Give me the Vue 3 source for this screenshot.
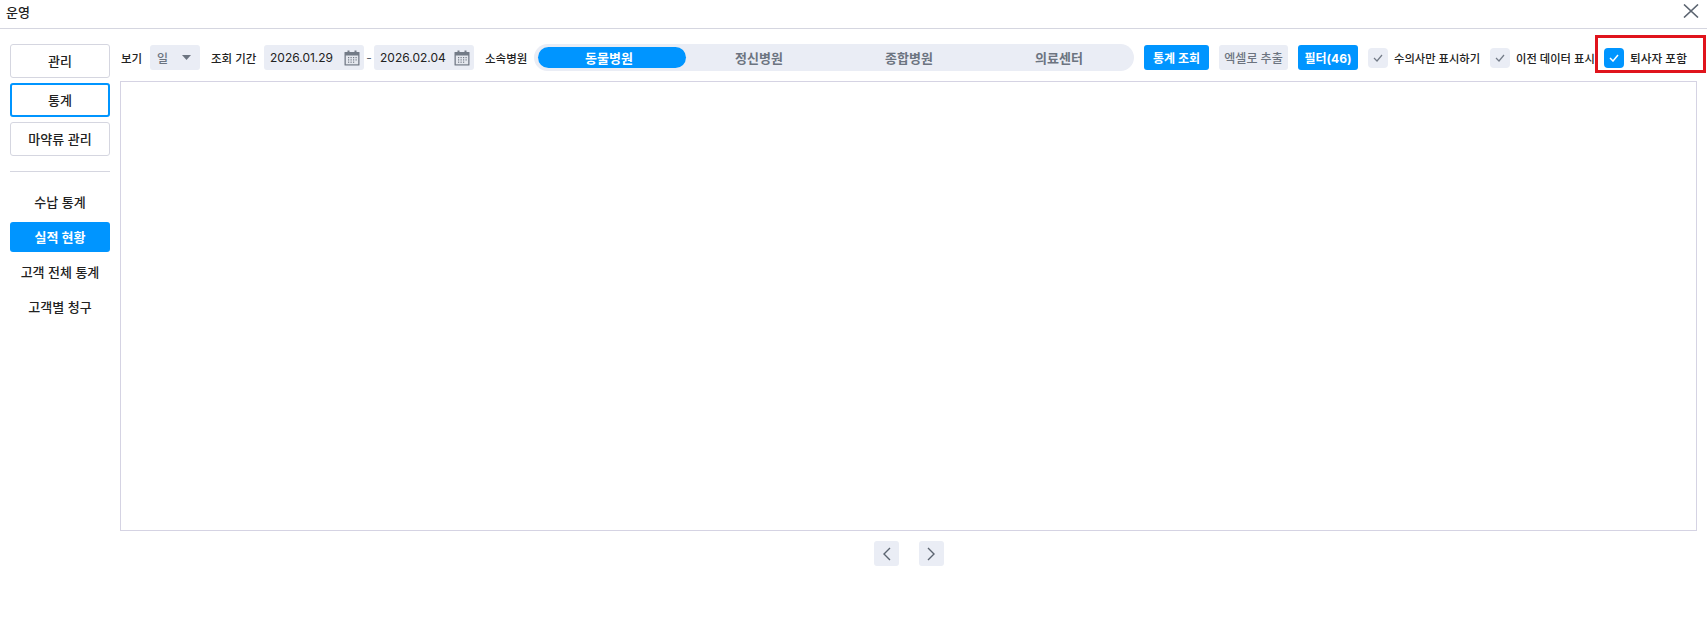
<script setup>
const modes = ['관리', '통계', '마약류 관리']
const subs = ['수납 통계', '실적 현황', '고객 전체 통계', '고객별 청구']
const hospitals = ['동물병원', '정신병원', '종합병원', '의료센터']
const dates = ['2026.01.29', '2026.02.04']
const gridDots = [
  [4, 7], [6.5, 7], [9, 7], [11.5, 7],
  [4, 9.3], [6.5, 9.3], [9, 9.3], [11.5, 9.3],
  [4, 11.6], [6.5, 11.6], [9, 11.6]
]
</script>

<template>
  <div class="page">
    <header class="top">
      <span class="title">운영</span>
      <svg class="close" width="16" height="14" viewBox="0 0 16 14">
        <path d="M1 0.5 L15 13.5 M15 0.5 L1 13.5" stroke="#5b6470" stroke-width="1.6" fill="none" />
      </svg>
    </header>

    <div class="body">
      <aside class="side">
        <button v-for="(m, i) in modes" :key="m" class="mode" :class="{ on: i === 1 }">{{ m }}</button>
        <hr class="rule" />
        <div v-for="(s, i) in subs" :key="s" class="sub" :class="{ on: i === 1 }">{{ s }}</div>
      </aside>

      <main class="main">
        <div class="bar">
          <span class="lbl l1">보기</span>
          <div class="select">
            <span class="sel-val">일</span>
            <svg width="9" height="5" viewBox="0 0 9 5"><path d="M0 0 H9 L4.5 5 Z" fill="#6c7480" /></svg>
          </div>
          <span class="lbl l2">조회 기간</span>
          <template v-for="(d, i) in dates" :key="d">
            <span v-if="i === 1" class="dash">-</span>
            <div class="date" :class="{ first: i === 0 }">
              <span>{{ d }}</span>
              <svg width="16" height="16" viewBox="0 0 16 16">
                <path d="M1 2 H15 Q15.5 2 15.5 2.5 V15 Q15.5 15.5 15 15.5 H1 Q0.5 15.5 0.5 15 V2.5 Q0.5 2 1 2 Z" fill="#737b87" />
                <rect x="3.5" y="0.5" width="2" height="3" fill="#737b87" />
                <rect x="10.5" y="0.5" width="2" height="3" fill="#737b87" />
                <rect x="1.8" y="5.5" width="12.4" height="8.8" fill="#e4e7ee" />
                <rect v-for="p in gridDots" :key="p.join()" :x="p[0]" :y="p[1]" width="1.2" height="1.2" fill="#737b87" />
              </svg>
            </div>
          </template>
          <span class="lbl l3">소속병원</span>
          <div class="track">
            <div v-for="(h, i) in hospitals" :key="h" class="seg" :class="{ on: i === 0 }"><span>{{ h }}</span></div>
          </div>
          <button class="btn blue b1">통계 조회</button>
          <button class="btn gray b2">엑셀로 추출</button>
          <button class="btn blue b3">필터(46)</button>
          <label class="chk c1"><i class="box"><svg width="10" height="8" viewBox="0 0 10 8"><path d="M1 4 L4 7 L9 1" stroke="#737b87" stroke-width="1.2" fill="none" /></svg></i>수의사만 표시하기</label>
          <label class="chk c2"><i class="box"><svg width="10" height="8" viewBox="0 0 10 8"><path d="M1 4 L4 7 L9 1" stroke="#737b87" stroke-width="1.2" fill="none" /></svg></i>이전 데이터 표시</label>
          <label class="chk c3"><i class="box active"><svg width="10" height="8" viewBox="0 0 10 8"><path d="M1 4 L4 7 L9 1" stroke="#fff" stroke-width="1.5" fill="none" /></svg></i>퇴사자 포함</label>
        </div>

        <div class="panel"></div>

        <div class="pager">
          <button class="nav"><svg width="9" height="14" viewBox="0 0 9 14"><path d="M8 1 L2 7 L8 13" stroke="#5b6470" stroke-width="1.4" fill="none" /></svg></button>
          <button class="nav"><svg width="9" height="14" viewBox="0 0 9 14"><path d="M1 1 L7 7 L1 13" stroke="#5b6470" stroke-width="1.4" fill="none" /></svg></button>
        </div>
      </main>
    </div>

    <div class="mark"></div>
  </div>
</template>

<style>
html, body { margin: 0; background: #fff; }
</style>

<style scoped>
.page {
  position: relative;
  width: 1707px;
  height: 618px;
  overflow: hidden;
  background: #fff;
  color: #222;
  font-family: Inter, "Noto Sans CJK KR", sans-serif;
}
.top {
  display: flex;
  align-items: center;
  justify-content: space-between;
  height: 22px;
  padding: 0 8px 6px 6px;
  border-bottom: 1px solid #d5d6e0;
}
.title { font-size: 13px; font-weight: 500; }
.close { display: block; }
.body {
  display: flex;
  gap: 10px;
  padding: 15px 10px 0;
}
.side {
  display: flex;
  flex-direction: column;
  width: 100px;
  flex: none;
}
.mode {
  height: 34px;
  margin-bottom: 5px;
  padding: 0 0 2px;
  box-sizing: border-box;
  background: #fff;
  border: 1px solid #d5d6e0;
  border-radius: 3px;
  font: inherit;
  font-size: 13px;
  font-weight: 500;
  color: #222;
}
.mode.on { border: 2px solid #0095ff; }
.rule {
  width: 100%;
  height: 1px;
  margin: 10px 0 15px;
  border: 0;
  background: #d5d6e0;
}
.sub {
  display: flex;
  align-items: center;
  justify-content: center;
  box-sizing: border-box;
  height: 30px;
  margin-bottom: 5px;
  padding-bottom: 2px;
  font-size: 13px;
  font-weight: 500;
  border-radius: 3px;
}
.sub.on { background: #0095ff; color: #fff; font-weight: 700; }
.main { flex: 1; min-width: 0; }
.bar {
  display: flex;
  align-items: center;
  height: 27px;
  margin-bottom: 10px;
  white-space: nowrap;
}
.lbl { font-size: 11.5px; font-weight: 500; flex: none; }
.l1 { width: 21px; margin-left: 1px; }
.l2 { width: 45px; margin-left: 11px; }
.l3 { width: 41px; margin-left: 11px; }
.select {
  display: flex;
  align-items: center;
  justify-content: space-between;
  box-sizing: border-box;
  width: 50px;
  height: 25px;
  margin-left: 8px;
  padding: 0 9px 0 7px;
  background: #eaedf5;
  border-radius: 3px;
}
.sel-val { color: #6c7480; font-size: 12px; font-weight: 500; }
.date {
  display: flex;
  align-items: center;
  justify-content: space-between;
  box-sizing: border-box;
  width: 100px;
  height: 25px;
  padding: 0 4px 0 6px;
  background: #eaedf5;
  border-radius: 3px;
  font-size: 12px;
}
.date.first { margin-left: 8px; }
.dash {
  width: 10px;
  text-align: center;
  color: #5b6470;
  font-size: 12px;
}
.track {
  display: flex;
  width: 600px;
  height: 27px;
  margin-left: 8px;
  flex: none;
  background: #eaedf5;
  border-radius: 13.5px;
}
.seg {
  position: relative;
  display: flex;
  align-items: center;
  justify-content: center;
  width: 150px;
  font-size: 13px;
  font-weight: 700;
  color: #6c7480;
}
.seg span { position: relative; }
.seg.on { color: #fff; }
.seg.on::before {
  content: "";
  position: absolute;
  left: 4px;
  top: 3px;
  width: 148px;
  height: 21px;
  border-radius: 10.5px;
  background: #0095ff;
}
.btn {
  height: 25px;
  margin-left: 10px;
  padding: 0;
  flex: none;
  border: 0;
  border-radius: 3px;
  font: inherit;
  font-size: 12px;
}
.blue { background: #0095ff; color: #fff; font-weight: 700; }
.gray { background: #eaedf5; color: #6c7480; font-weight: 500; }
.b1 { width: 65px; }
.b2 { width: 69px; }
.b3 { width: 60px; }
.chk {
  display: flex;
  align-items: center;
  flex: none;
  gap: 6px;
  font-size: 11.3px;
  font-weight: 500;
}
.c1 { width: 122px; margin-left: 10px; }
.c2 { width: 114px; }
.c3 { font-size: 11.7px; }
.box {
  display: flex;
  align-items: center;
  justify-content: center;
  width: 20px;
  height: 20px;
  flex: none;
  background: #eaedf5;
  border-radius: 4px;
}
.box.active { background: #0095ff; }
.panel {
  box-sizing: border-box;
  height: 450px;
  border: 1px solid #d5d3e3;
}
.pager {
  display: flex;
  justify-content: center;
  gap: 20px;
  margin-top: 10px;
}
.nav {
  display: flex;
  align-items: center;
  justify-content: center;
  width: 25px;
  height: 25px;
  padding: 0;
  border: 0;
  border-radius: 3px;
  background: #eaedf5;
}
.mark {
  position: absolute;
  left: 1595px;
  top: 35px;
  width: 111px;
  height: 38px;
  box-sizing: border-box;
  border: 3.5px solid #e0141c;
}
</style>
